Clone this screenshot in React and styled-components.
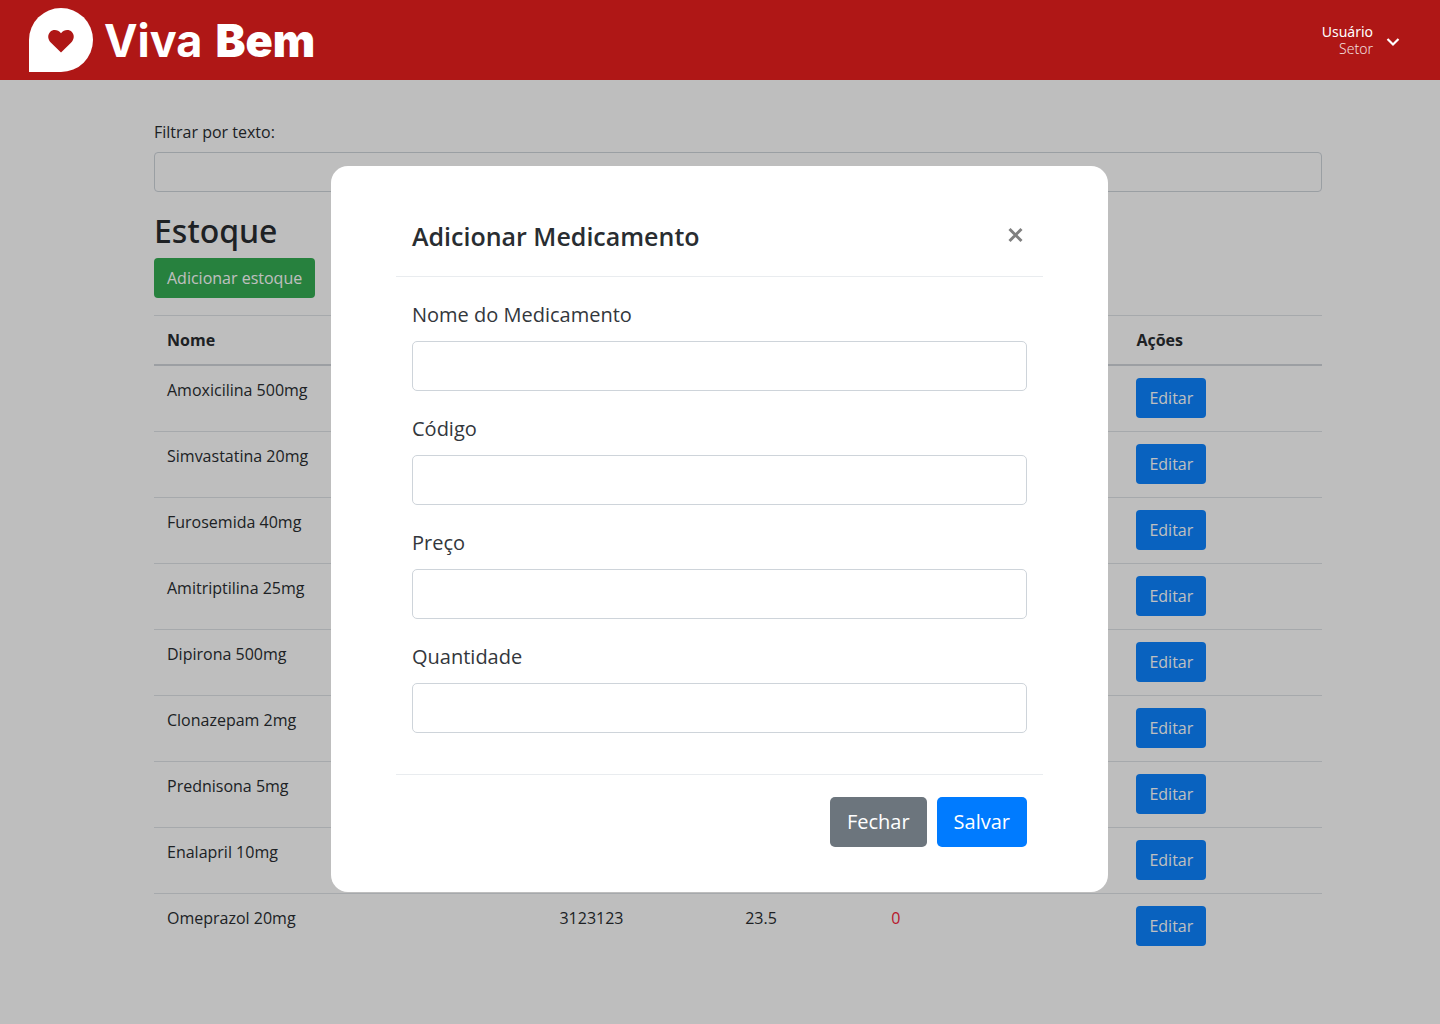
import React, { useState } from "react";
import styled, { createGlobalStyle } from "styled-components";

const GlobalStyle = createGlobalStyle`
  *, *::before, *::after { box-sizing: border-box; }
  body {
    margin: 0;
    background: #fefefe;
    color: #292d31;
    font-family: "Open Sans", "Noto Sans", sans-serif;
    font-size: 16px;
    line-height: 24px;
  }
  button, input { font: inherit; }
`;

const Header = styled.header`
  position: relative;
  z-index: 2;
  display: flex;
  align-items: center;
  justify-content: space-between;
  height: 80px;
  padding: 0 40px 0 28px;
  background: #af1716;
  color: #fff;
`;

const Brand = styled.a`
  display: flex;
  align-items: center;
  gap: 10px;
  color: inherit;
  text-decoration: none;
`;

const BrandName = styled.span`
  display: flex;
  gap: 13px;
  padding-top: 2px;
  font-family: Inter, sans-serif;
  font-size: 45px;
  line-height: 64px;
  font-weight: 700;
  white-space: nowrap;

  strong { font-weight: 900; }
`;

const UserMenu = styled.button`
  display: flex;
  align-items: center;
  gap: 13px;
  padding: 0;
  border: 0;
  background: none;
  color: inherit;
  text-align: right;
  cursor: pointer;
`;

const UserText = styled.span`
  display: flex;
  flex-direction: column;
  font-family: "Noto Sans", sans-serif;
  font-size: 14px;
  line-height: 17px;
`;

const Sector = styled.span`
  font-weight: 300;
  opacity: 0.85;
`;

const Main = styled.main`
  padding: 40px 118px 60px 154px;
`;

const FilterLabel = styled.label`
  display: block;
  margin-bottom: 8px;
`;

const TextInput = styled.input`
  display: block;
  width: 100%;
  height: ${(p) => (p.$large ? 50 : 40)}px;
  padding: 6px 12px;
  border: 1px solid #ced4da;
  border-radius: ${(p) => (p.$large ? 5 : 4)}px;
  background: transparent;
  color: inherit;
  outline: 0;

  &:focus-visible { border-color: #80bdff; }
`;

const PageTitle = styled.h1`
  margin: 19px 0 7px;
  font-family: "Noto Sans", sans-serif;
  font-size: 32px;
  line-height: 40px;
  font-weight: 500;
`;

const colors = {
  success: "#34ad53",
  edit: "#0c83ff",
  primary: "#007bff",
  secondary: "#6c757d",
};

const Button = styled.button`
  height: ${(p) => (p.$large ? 50 : 40)}px;
  padding: 0 ${(p) => (p.$large ? 17 : 13)}px;
  border: 0;
  border-radius: ${(p) => (p.$large ? 5 : 4)}px;
  background: ${(p) => colors[p.$tone]};
  color: #fff;
  font-size: ${(p) => (p.$large ? 20 : 16)}px;
  white-space: nowrap;
  cursor: pointer;
`;

const Table = styled.table`
  width: 100%;
  margin-top: 17px;
  border-spacing: 0;
  table-layout: fixed;
  text-align: left;
`;

const Column = styled.col`
  width: ${(p) => p.$share}%;
`;

const HeadCell = styled.th`
  padding: 12px 13px;
  border-top: 1px solid #dee2e6;
  border-bottom: 2px solid #d0d5da;
  font-weight: 700;
`;

const Cell = styled.td`
  padding: 12px 13px 13px;
  border-bottom: 1px solid #dee2e6;
  color: ${(p) => (p.$alert ? "#f5233a" : "inherit")};
  vertical-align: top;

  tr:last-child > & { border-bottom: 0; }
`;

const Backdrop = styled.div`
  position: fixed;
  inset: 80px 0 0;
  z-index: 1;
  display: flex;
  align-items: flex-start;
  justify-content: center;
  padding: 86px 21px 0 20px;
  background: rgba(0, 0, 0, 0.25);
`;

const Dialog = styled.section`
  width: 100%;
  max-width: 777px;
  padding: 50px 65px 45px;
  border-radius: 17px;
  background: #fff;
`;

const DialogHeader = styled.header`
  display: flex;
  align-items: flex-start;
  justify-content: space-between;
  padding: 4px 16px 24px;
  border-bottom: 1px solid #e9ecef;
`;

const DialogTitle = styled.h2`
  margin: 0;
  font-size: 25px;
  line-height: 32px;
  font-weight: 600;
`;

const CloseButton = styled.button`
  display: flex;
  margin: 4px 0 0;
  padding: 0;
  border: 0;
  background: none;
  color: #808080;
  cursor: pointer;
`;

const Fields = styled.div`
  display: grid;
  gap: 23px;
  padding: 23px 16px 41px;
`;

const Field = styled.div`
  display: grid;
  gap: 11px;
  color: #33373c;
  font-size: 20px;
  line-height: 30px;
`;

const DialogFooter = styled.footer`
  display: flex;
  justify-content: flex-end;
  gap: 10px;
  padding: 22px 16px 0;
  border-top: 1px solid #e9ecef;
`;

const medicines = [
  { name: "Amoxicilina 500mg" },
  { name: "Simvastatina 20mg" },
  { name: "Furosemida 40mg" },
  { name: "Amitriptilina 25mg" },
  { name: "Dipirona 500mg" },
  { name: "Clonazepam 2mg" },
  { name: "Prednisona 5mg" },
  { name: "Enalapril 10mg" },
  { name: "Omeprazol 20mg", code: "3123123", price: 23.5, quantity: 0 },
];

const fields = [
  { id: "nome", label: "Nome do Medicamento" },
  { id: "codigo", label: "Código" },
  { id: "preco", label: "Preço" },
  { id: "quantidade", label: "Quantidade" },
];

function LogoMark() {
  return (
    <svg width="66" height="66" viewBox="0 0 66 66" aria-hidden="true">
      <path d="M33 1a32 32 0 1 1 0 64H1V33A32 32 0 0 1 33 1Z" fill="#fff" />
      <path
        d="M33 45.5 23 35.8c-3.4-3.4-3.6-8-.9-10.8 2.900-2.900 7.900-2.600 10.900 1.300 3-3.900 8-4.200 10.900-1.300 2.700 2.800 2.500 7.400-.9 10.800Z"
        fill="#af1716"
      />
    </svg>
  );
}

function Chevron() {
  return (
    <svg width="14" height="14" viewBox="0 0 14 14" fill="none" aria-hidden="true">
      <path d="m1.500 6 5.500 5.500L12.500 6" stroke="currentColor" strokeWidth="2.200" />
    </svg>
  );
}

function CloseIcon() {
  return (
    <svg width="22" height="22" viewBox="0 0 22 22" fill="none" aria-hidden="true">
      <path d="m4.500 5 12 12m0-12-12 12" stroke="currentColor" strokeWidth="3" />
    </svg>
  );
}

export default function App() {
  const [open, setOpen] = useState(true);
  const close = () => setOpen(false);

  return (
    <>
      <GlobalStyle />
      <Header>
        <Brand href="#">
          <LogoMark />
          <BrandName>
            <span>Viva</span>
            <strong>Bem</strong>
          </BrandName>
        </Brand>
        <UserMenu type="button">
          <UserText>
            <span>Usuário</span>
            <Sector>Setor</Sector>
          </UserText>
          <Chevron />
        </UserMenu>
      </Header>

      <Main>
        <FilterLabel htmlFor="filtro">Filtrar por texto:</FilterLabel>
        <TextInput id="filtro" type="text" />
        <PageTitle>Estoque</PageTitle>
        <Button type="button" $tone="success" onClick={() => setOpen(true)}>
          Adicionar estoque
        </Button>
        <Table>
          <colgroup>
            <Column $share={33.6} />
            <Column $share={15.9} />
            <Column $share={12.5} />
            <Column $share={21} />
            <Column $share={17} />
          </colgroup>
          <thead>
            <tr>
              <HeadCell scope="col">Nome</HeadCell>
              <HeadCell scope="col">Código</HeadCell>
              <HeadCell scope="col">Preço</HeadCell>
              <HeadCell scope="col">Quantidade</HeadCell>
              <HeadCell scope="col">Ações</HeadCell>
            </tr>
          </thead>
          <tbody>
            {medicines.map((item) => (
              <tr key={item.name}>
                <Cell>{item.name}</Cell>
                <Cell>{item.code}</Cell>
                <Cell>{item.price}</Cell>
                <Cell $alert={item.quantity === 0}>{item.quantity}</Cell>
                <Cell>
                  <Button type="button" $tone="edit">Editar</Button>
                </Cell>
              </tr>
            ))}
          </tbody>
        </Table>
      </Main>

      {open && (
        <Backdrop>
          <Dialog role="dialog" aria-modal="true" aria-labelledby="dialog-title">
            <DialogHeader>
              <DialogTitle id="dialog-title">Adicionar Medicamento</DialogTitle>
              <CloseButton type="button" aria-label="Fechar janela" onClick={close}>
                <CloseIcon />
              </CloseButton>
            </DialogHeader>
            <Fields>
              {fields.map(({ id, label }) => (
                <Field key={id}>
                  <label htmlFor={id}>{label}</label>
                  <TextInput id={id} type="text" $large />
                </Field>
              ))}
            </Fields>
            <DialogFooter>
              <Button type="button" $tone="secondary" $large onClick={close}>Fechar</Button>
              <Button type="button" $tone="primary" $large>Salvar</Button>
            </DialogFooter>
          </Dialog>
        </Backdrop>
      )}
    </>
  );
}
